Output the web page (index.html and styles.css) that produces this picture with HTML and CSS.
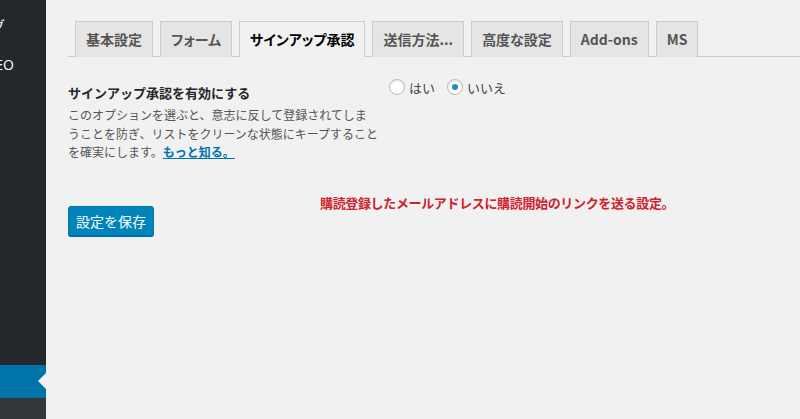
FILE: index.html
```html
<!DOCTYPE html>
<html lang="ja">
<head>
    <meta charset="UTF-8">
    <title>サインアップ承認</title>
    <link rel="stylesheet" href="styles.css">
</head>
<body>
    <div class="sidebar">
        <div class="sidebar__item sidebar__item--first"><span>プラグ</span></div>
        <div class="sidebar__item"><span>All in One SEO</span></div>
        <div class="sidebar__spacer"></div>
        <div class="sidebar__item sidebar__item--current"></div>
        <div class="sidebar__rest"></div>
    </div>
    <div class="main">
        <div class="tabs">
            <a class="tabs__tab">基本設定</a>
            <a class="tabs__tab">フォーム</a>
            <a class="tabs__tab tabs__tab--active">サインアップ承認</a>
            <a class="tabs__tab">送信方法...</a>
            <a class="tabs__tab">高度な設定</a>
            <a class="tabs__tab">Add-ons</a>
            <a class="tabs__tab">MS</a>
        </div>
        <div class="form-row">
            <div class="form-row__label">
                <div class="form-row__title">サインアップ承認を有効にする</div>
                <p class="form-row__desc">このオプションを選ぶと、意志に反して登録されてしま<br>うことを防ぎ、リストをクリーンな状態にキープすること<br>を確実にします。<a class="form-row__link">もっと知る。</a></p>
            </div>
            <div class="form-row__field">
                <label class="radio"><span class="radio__circle"></span>はい</label>
                <label class="radio"><span class="radio__circle radio__circle--checked"></span>いいえ</label>
            </div>
        </div>
        <div class="note">購読登録したメールアドレスに購読開始のリンクを送る設定。</div>
        <button class="button">設定を保存</button>
    </div>
</body>
</html>
```

FILE: styles.css
```css
body {
    margin: 0;
    padding: 0;
    display: flex;
    height: 419px;
    overflow: hidden;
    background-color: #f1f1f1;
    color: #444444;
    font-family: "Noto Sans CJK JP", "Noto Sans", sans-serif;
}

.sidebar {
    width: 46px;
    flex-shrink: 0;
    background-color: #23282d;
    display: flex;
    flex-direction: column;
    overflow: hidden;
}

.sidebar__item {
    height: 34px;
    display: flex;
    justify-content: flex-end;
    align-items: center;
    padding-right: 32px;
    color: #ffffff;
    font-family: "Open Sans", "Noto Sans CJK JP", sans-serif;
    font-size: 14px;
    white-space: nowrap;
}

.sidebar__item--first {
    margin-top: 8px;
    padding-right: 41px;
}

.sidebar__item--first + .sidebar__item {
    margin-top: 5px;
}

.sidebar__spacer {
    flex: 1;
}

.sidebar__item--current {
    position: relative;
    background-color: #0073aa;
    height: 33px;
}

.sidebar__item--current::after {
    content: "";
    position: absolute;
    right: 0;
    top: 8px;
    border: 8px solid transparent;
    border-right-color: #f1f1f1;
}

.sidebar__rest {
    height: 21px;
    background-color: #32373c;
}

.main {
    flex: 1;
    padding: 21px 0 0 22px;
}

.tabs {
    display: flex;
    gap: 7px;
    padding-left: 7px;
    border-bottom: 1px solid #cccccc;
}

.tabs__tab {
    display: block;
    padding: 5px 10px;
    line-height: 24px;
    font-size: 14px;
    font-weight: bold;
    font-feature-settings: "palt";
    color: #555555;
    background-color: #e5e5e5;
    border: 1px solid #cccccc;
    border-bottom: none;
    margin-bottom: -1px;
}

.tabs__tab--active {
    background-color: #f1f1f1;
    color: #000000;
    border-bottom: 1px solid #f1f1f1;
}

.form-row {
    display: flex;
    margin-top: 26px;
}

.form-row__label {
    width: 300px;
    padding-right: 21px;
}

.form-row__title {
    font-size: 13px;
    font-weight: bold;
    color: #23282d;
    line-height: 20px;
}

.form-row__desc {
    margin: 3px 0 0;
    font-size: 12px;
    line-height: 18.5px;
    color: #555555;
    white-space: nowrap;
}

.form-row__link {
    color: #0073aa;
    text-decoration: underline;
    font-weight: bold;
}

.form-row__field {
    display: flex;
    gap: 12px;
    margin-top: -5px;
}

.radio {
    display: flex;
    align-items: center;
    gap: 4px;
    font-size: 13px;
    height: 18px;
    color: #444444;
}

.radio__circle {
    width: 14px;
    height: 14px;
    border: 1px solid #b4b9be;
    border-radius: 50%;
    background-color: #ffffff;
    box-shadow: inset 0 1px 2px rgba(0, 0, 0, 0.1);
    display: flex;
    align-items: center;
    justify-content: center;
}

.radio__circle--checked::before {
    content: "";
    width: 6px;
    height: 6px;
    border-radius: 50%;
    background-color: #1e8cbe;
}

.note {
    margin: 33px 0 0 252px;
    font-size: 13px;
    font-weight: bold;
    letter-spacing: -0.35px;
    color: #d0212e;
    line-height: 16px;
}

.button {
    display: block;
    margin-top: -5px;
    height: 30px;
    padding: 0 7px;
    font-family: "Noto Sans CJK JP", sans-serif;
    font-size: 14px;
    color: #ffffff;
    background-color: #0085ba;
    border: 1px solid #0073aa;
    border-radius: 3px;
    box-shadow: 0 1px 0 #006799;
}
```
